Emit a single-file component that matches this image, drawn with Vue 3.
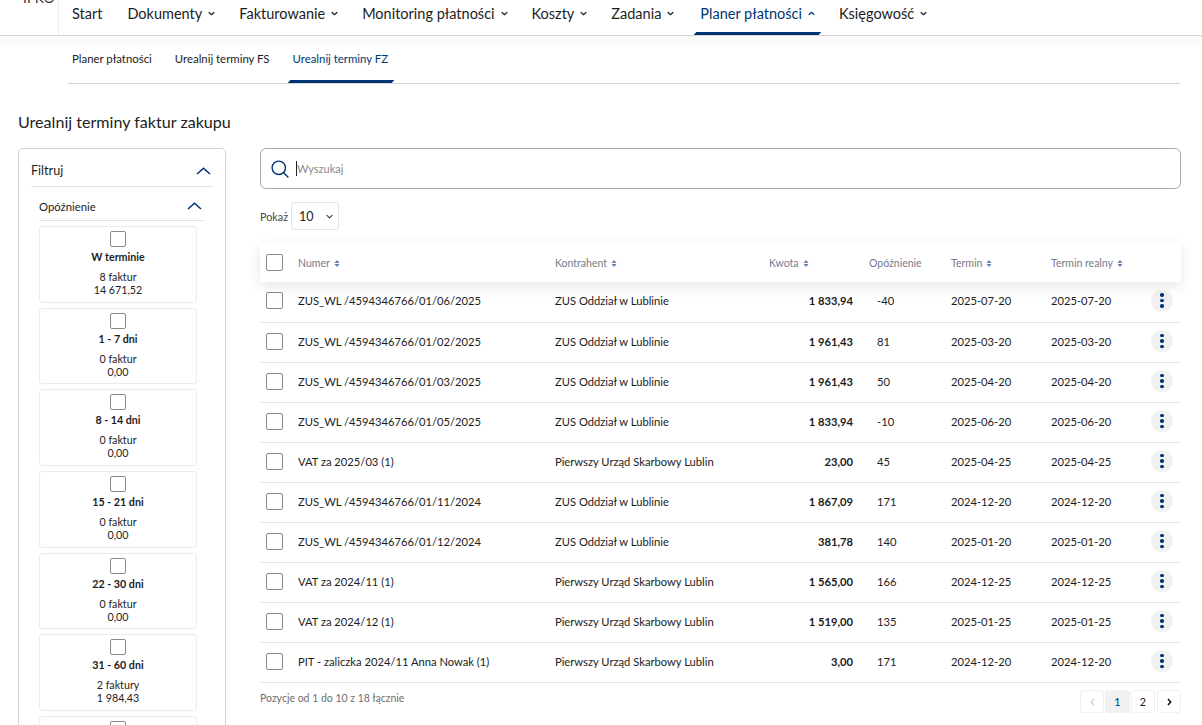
<script setup>
const nav = [
  { t: 'Start' },
  { t: 'Dokumenty', c: 1 },
  { t: 'Fakturowanie', c: 1 },
  { t: 'Monitoring płatności', c: 1 },
  { t: 'Koszty', c: 1 },
  { t: 'Zadania', c: 1 },
  { t: 'Planer płatności', c: 1, active: 1 },
  { t: 'Księgowość', c: 1 },
]
const subs = [
  { t: 'Planer płatności' },
  { t: 'Urealnij terminy FS' },
  { t: 'Urealnij terminy FZ', active: 1 },
]
const cards = [
  ['W terminie', '8 faktur', '14 671,52'],
  ['1 - 7 dni', '0 faktur', '0,00'],
  ['8 - 14 dni', '0 faktur', '0,00'],
  ['15 - 21 dni', '0 faktur', '0,00'],
  ['22 - 30 dni', '0 faktur', '0,00'],
  ['31 - 60 dni', '2 faktury', '1 984,43'],
  ['61 - 90 dni', '0 faktur', '0,00'],
]
const Z = 'ZUS Oddział w Lublinie'
const U = 'Pierwszy Urząd Skarbowy Lublin'
const rows = [
  ['ZUS_WL /4594346766/01/06/2025', Z, '1 833,94', '-40', '2025-07-20', '2025-07-20'],
  ['ZUS_WL /4594346766/01/02/2025', Z, '1 961,43', '81', '2025-03-20', '2025-03-20'],
  ['ZUS_WL /4594346766/01/03/2025', Z, '1 961,43', '50', '2025-04-20', '2025-04-20'],
  ['ZUS_WL /4594346766/01/05/2025', Z, '1 833,94', '-10', '2025-06-20', '2025-06-20'],
  ['VAT za 2025/03 (1)', U, '23,00', '45', '2025-04-25', '2025-04-25'],
  ['ZUS_WL /4594346766/01/11/2024', Z, '1 867,09', '171', '2024-12-20', '2024-12-20'],
  ['ZUS_WL /4594346766/01/12/2024', Z, '381,78', '140', '2025-01-20', '2025-01-20'],
  ['VAT za 2024/11 (1)', U, '1 565,00', '166', '2024-12-25', '2024-12-25'],
  ['VAT za 2024/12 (1)', U, '1 519,00', '135', '2025-01-25', '2025-01-25'],
  ['PIT - zaliczka 2024/11 Anna Nowak (1)', U, '3,00', '171', '2024-12-20', '2024-12-20'],
]
const heads = [
  { t: 'Numer', s: 1 },
  { t: 'Kontrahent', s: 1 },
  { t: 'Kwota', s: 1 },
  { t: 'Opóźnienie' },
  { t: 'Termin', s: 1 },
  { t: 'Termin realny', s: 1 },
]
</script>

<template>
  <div class="page">
    <header class="topbar">
      <div class="logo"><span>IFKO</span></div>
      <nav class="mainnav">
        <a v-for="n in nav" :key="n.t" class="navitem" :class="{ active: n.active }">
          {{ n.t }}
          <svg v-if="n.c" class="navchev" width="7" height="5" viewBox="0 0 7 5">
            <path :d="n.active ? 'M.7 3.8 3.5 1.2 6.3 3.8' : 'M.7 1.2 3.5 3.8 6.3 1.2'" fill="none" stroke="currentColor" stroke-width="1.2" />
          </svg>
        </a>
      </nav>
    </header>

    <div class="subwrap">
      <nav class="subnav">
        <a v-for="s in subs" :key="s.t" class="subitem" :class="{ active: s.active }">{{ s.t }}</a>
      </nav>
    </div>

    <h1 class="title">Urealnij terminy faktur zakupu</h1>

    <div class="content">
      <aside class="side">
        <div class="sidehead">
          <span>Filtruj</span>
          <svg width="15" height="8" viewBox="0 0 15 8"><path d="M1 7 7.5 1.2 14 7" fill="none" stroke="#003574" stroke-width="1.6" /></svg>
        </div>
        <div class="group">
          <div class="grouphead">
            <span>Opóźnienie</span>
            <svg width="15" height="8" viewBox="0 0 15 8"><path d="M1 7 7.5 1.2 14 7" fill="none" stroke="#003574" stroke-width="1.6" /></svg>
          </div>
          <div class="cards">
            <div v-for="c in cards" :key="c[0]" class="card">
              <span class="check small"></span>
              <b>{{ c[0] }}</b>
              <span class="cnt">{{ c[1] }}</span>
              <span class="amt">{{ c[2] }}</span>
            </div>
          </div>
        </div>
      </aside>

      <main class="main">
        <div class="search">
          <svg width="18" height="18" viewBox="0 0 18 18"><circle cx="7.8" cy="7.8" r="6.7" fill="none" stroke="#003574" stroke-width="1.4" /><path d="M12.5 12.5 17.4 17.4" stroke="#003574" stroke-width="1.4" /></svg>
          <span class="caret"></span>
          <span class="ph">Wyszukaj</span>
        </div>

        <div class="show">
          <span>Pokaż</span>
          <div class="select">
            <span>10</span>
            <svg width="7" height="5" viewBox="0 0 7 5"><path d="M.7 1.2 3.5 3.8 6.3 1.2" fill="none" stroke="#333" stroke-width="1.1" /></svg>
          </div>
        </div>

        <div class="table">
          <div class="row head">
            <div><span class="check"></span></div>
            <div v-for="h in heads" :key="h.t" class="hcell">
              {{ h.t }}
              <svg v-if="h.s" class="sort" width="6" height="7" viewBox="0 0 6 7"><path d="M3 0 5.6 3H.4zM3 7 .4 4h5.2z" fill="#6484ad" /></svg>
            </div>
          </div>
          <div v-for="(r, i) in rows" :key="i" class="row">
            <div><span class="check"></span></div>
            <div>{{ r[0] }}</div>
            <div>{{ r[1] }}</div>
            <div class="kw">{{ r[2] }}</div>
            <div class="op">{{ r[3] }}</div>
            <div>{{ r[4] }}</div>
            <div>{{ r[5] }}</div>
            <div class="act">
              <span class="dots"><i></i><i></i><i></i></span>
            </div>
          </div>
        </div>

        <div class="foot">
          <span class="info">Pozycje od 1 do 10 z 18 łącznie</span>
          <div class="pager">
            <span class="pg dis">
              <svg width="5" height="8" viewBox="0 0 5 8"><path d="M4 1 1.3 4 4 7" fill="none" stroke="currentColor" stroke-width="1.5" /></svg>
            </span>
            <span class="pg cur">1</span>
            <span class="pg">2</span>
            <span class="pg next">
              <svg width="5" height="8" viewBox="0 0 5 8"><path d="M1 1 3.7 4 1 7" fill="none" stroke="currentColor" stroke-width="1.5" /></svg>
            </span>
          </div>
        </div>
      </main>
    </div>
  </div>
</template>

<style>
html, body { margin: 0; height: 725px; overflow: hidden; background: #fff; }
</style>

<style scoped>
.page {
  font-family: Lato, "Noto Sans", sans-serif;
  color: #1c1c1c;
  height: 725px;
  overflow: hidden;
  background: #fff;
}
.topbar {
  display: flex;
  height: 35px;
  border-bottom: 1px solid #d6d6d6;
}
.logo {
  width: 59px;
  border-right: 1px solid #ececec;
  height: 35px;
  box-sizing: border-box;
  position: relative;
  overflow: hidden;
}
.logo span {
  position: absolute;
  left: 23px;
  top: -11px;
  font-size: 14px;
  color: #334;
}
.mainnav {
  display: flex;
  padding-left: 7px;
}
.navitem {
  position: relative;
  display: flex;
  align-items: center;
  gap: 6px;
  padding: 0 6px 9px;
  margin-right: 12px;
  font-size: 14.5px;
  height: 35px;
  box-sizing: border-box;
  white-space: nowrap;
}
.navitem:first-child { margin-right: 13px; }
.navitem.active { color: #003574; margin-left: 2px; }
.navitem.active::after {
  content: "";
  position: absolute;
  left: 1px;
  right: 1px;
  bottom: 0;
  height: 3px;
  background: #003574;
  transform: skewX(-40deg);
}
.subwrap {
  padding: 0 22px 0 68px;
  background: linear-gradient(#f9f9f9, #fff 14px);
}
.subnav {
  display: flex;
  height: 48px;
  box-sizing: border-box;
  border-bottom: 1px solid #d6d6d6;
  gap: 13px;
}
.subitem {
  position: relative;
  padding: 0 5px;
  font-size: 11.4px;
  line-height: 46px;
  height: 47px;
  box-sizing: border-box;
}
.subitem:first-child { padding-left: 4px; }
.subitem.active { color: #003574; }
.subitem.active::after {
  content: "";
  position: absolute;
  left: 1px;
  right: 1px;
  bottom: 0;
  height: 3px;
  background: #003574;
  transform: skewX(-40deg);
}
.title {
  margin: 28px 0 16px 18px;
  font-size: 16.1px;
  line-height: 20px;
  font-weight: 400;
  color: #222;
}
.content {
  display: flex;
  align-items: flex-start;
  padding-left: 18px;
  gap: 34px;
}
.side {
  width: 208px;
  box-sizing: border-box;
  border: 1px solid #d2d2d2;
  border-radius: 5px;
  padding: 0 12px;
  flex: none;
}
.sidehead {
  display: flex;
  justify-content: space-between;
  align-items: center;
  height: 38px;
  padding: 6px 2px 0 0;
  box-sizing: border-box;
  border-bottom: 1px solid #e2e2e2;
  font-size: 12.6px;
}
.group { padding: 0 8px; }
.grouphead {
  display: flex;
  justify-content: space-between;
  align-items: center;
  height: 34px;
  box-sizing: border-box;
  padding: 5px 3px 0 0;
  border-bottom: 1px solid #e2e2e2;
  font-size: 11.3px;
}
.cards {
  display: flex;
  flex-direction: column;
  gap: 5px;
  padding: 5px 0;
  width: 158px;
}
.card {
  display: flex;
  flex-direction: column;
  align-items: center;
  height: 76.7px;
  box-sizing: border-box;
  border: 1px solid #ececec;
  border-radius: 3px;
  padding-top: 4px;
  font-size: 10.7px;
  line-height: 13px;
  flex: none;
}
.card b {
  margin-top: 3px;
  font-weight: 700;
  line-height: 14px;
}
.cnt { margin-top: 6px; }
.check {
  display: block;
  width: 17px;
  height: 17px;
  border: 1px solid #8a8a8a;
  border-radius: 2px;
  box-sizing: border-box;
  background: #fff;
}
.check.small { flex: none; width: 16px; height: 16px; }
.main {
  width: 921px;
  flex: none;
}
.search {
  display: flex;
  align-items: center;
  height: 41px;
  box-sizing: border-box;
  border: 1px solid #a8a8a8;
  border-radius: 6px;
  padding-left: 10px;
}
.caret {
  width: 1px;
  height: 15px;
  background: #222;
  margin-left: 7px;
}
.ph {
  font-size: 11px;
  color: #8a8a8a;
}
.show {
  display: flex;
  align-items: center;
  gap: 3px;
  margin-top: 13px;
  font-size: 10.8px;
  color: #444;
}
.select {
  width: 48px;
  height: 28px;
  box-sizing: border-box;
  border: 1px solid #e4e4e4;
  border-radius: 4px;
  display: flex;
  align-items: center;
  justify-content: space-between;
  padding: 0 5px 0 7px;
  color: #222;
  font-size: 12.5px;
}
.table { margin-top: 13px; }
.row {
  display: grid;
  grid-template-columns: 38px 257px 214px 100px 82px 100px 100px 30px;
  align-items: center;
  height: 40px;
  padding-bottom: 3px;
  box-sizing: border-box;
  border-bottom: 1px solid #e4e4e4;
  font-size: 11.2px;
  color: #1c1c1c;
}
.row > div:first-child { padding-left: 6px; }
.row.head {
  height: 39px;
  padding-bottom: 0;
  border-bottom: none;
  box-shadow: 0 4px 14px rgba(0, 0, 0, 0.1);
  color: #747c8a;
  font-size: 10.5px;
  position: relative;
}
.row.head + .row { height: 41px; padding-top: 1px; padding-bottom: 4px; }
.hcell { display: flex; align-items: center; gap: 4px; white-space: nowrap; }
.sort { margin-top: 2px; }
.kw {
  font-weight: 700;
  text-align: right;
  padding-right: 16px;
  white-space: nowrap;
}
.op { padding-left: 8px; }
.act { display: flex; justify-content: flex-end; padding-right: 8px; }
.dots {
  width: 22px;
  height: 22px;
  border-radius: 50%;
  background: #f1f1f1;
  display: flex;
  flex-direction: column;
  align-items: center;
  justify-content: center;
  gap: 2px;
}
.dots i {
  width: 3.5px;
  height: 3.5px;
  border-radius: 50%;
  background: #003574;
}
.foot {
  display: flex;
  justify-content: space-between;
  align-items: flex-start;
  padding-top: 7px;
}
.info {
  font-size: 10.5px;
  color: #6f6f6f;
  line-height: 16px;
}
.pager {
  display: flex;
  gap: 1px;
}
.pg {
  width: 24px;
  height: 23px;
  box-sizing: border-box;
  border: 1px solid #f0f0f0;
  border-radius: 3px;
  display: flex;
  align-items: center;
  justify-content: center;
  font-size: 10.8px;
  color: #222;
}
.pg.cur { background: #f1f1f1; color: #003574; width: 25px; }
.pg.dis { color: #d4d4d4; }
.pg.next { margin-left: 1px; color: #111; }
</style>
